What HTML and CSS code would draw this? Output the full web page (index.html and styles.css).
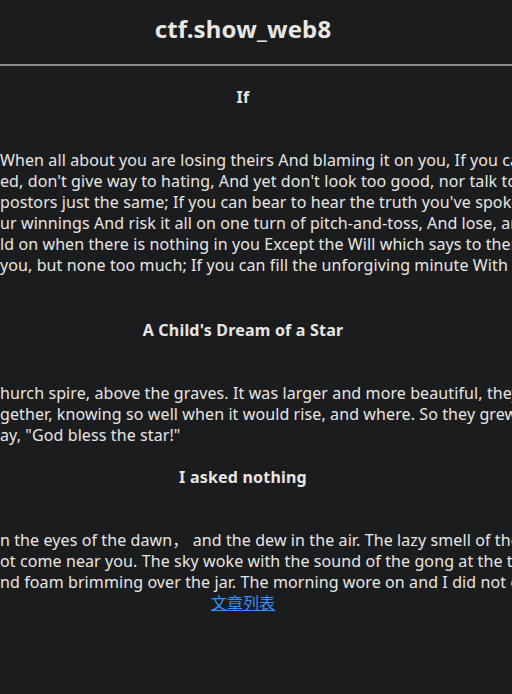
FILE: index.html
```html
<!DOCTYPE html>
<html lang="zh-CN">
<head>
<meta charset="utf-8">
<title>ctf.show_web8</title>
<link rel="stylesheet" href="styles.css">
</head>
<body>
<div class="page">
  <header class="top">
    <h1 class="site-title">ctf.show_web8</h1>
  </header>
  <hr class="rule">
  <main class="articles">
    <article class="post post--first">
      <h2 class="post-title">If</h2>
      <p class="post-body post-body--spaced">When all about you are losing theirs And blaming it on you, If you can trust yourself when all men doubt you,<br>ed, don't give way to hating, And yet don't look too good, nor talk too wise: If you can dream<br>postors just the same; If you can bear to hear the truth you've spoken Twisted by knaves<br>ur winnings And risk it all on one turn of pitch-and-toss, And lose, and start again<br>ld on when there is nothing in you Except the Will which says to them: 'Hold on!'<br>you, but none too much; If you can fill the unforgiving minute With sixty seconds' worth</p>
    </article>
    <article class="post">
      <h2 class="post-title">A Child's Dream of a Star</h2>
      <p class="post-body">hurch spire, above the graves. It was larger and more beautiful, they thought, than all the others,<br>gether, knowing so well when it would rise, and where. So they grew to be such friends<br>ay, "God bless the star!"</p>
    </article>
    <article class="post">
      <h2 class="post-title">I asked nothing</h2>
      <p class="post-body">n the eyes of the dawn， and the dew in the air. The lazy smell of the damp grass<br>ot come near you. The sky woke with the sound of the gong at the temple.<br>nd foam brimming over the jar. The morning wore on and I did not come near you.</p>
    </article>
    <nav class="list-nav"><a class="list-link" href="#">文章列表</a></nav>
  </main>
</div>
</body>
</html>
```
FILE: styles.css
```css
html, body {
  margin: 0;
  padding: 0;
  background: #1b1c1e;
  overflow: hidden;
}

body {
  color: #e8e6e3;
  font-family: "Noto Sans", "Noto Sans CJK SC", sans-serif;
  font-size: 16px;
  line-height: 21px;
}

.page {
  width: 512px;
  height: 694px;
  overflow: hidden;
}

.top {
  width: 486px;
  padding-top: 13px;
  text-align: center;
}

.site-title {
  margin: 0;
  font-size: 24px;
  line-height: 32px;
  font-weight: 700;
  letter-spacing: 0.15px;
}

.rule {
  margin: 19px 0 0;
  border: none;
  height: 2px;
  background: #8b8b8b;
}

.articles {
  width: 486px;
  padding-top: 21px;
  display: flex;
  flex-direction: column;
  gap: 21px;
}

.post-title {
  margin: 0;
  font-size: 16px;
  line-height: 21px;
  font-weight: 700;
  letter-spacing: 0.2px;
  text-align: center;
}

.post-body {
  margin: 42px 0 0;
  white-space: nowrap;
  text-align: left;
  letter-spacing: 0.1px;
}

.post-body--spaced {
  margin-bottom: 23px;
}

.list-nav {
  margin-top: -21px;
  text-align: center;
}

.list-link {
  color: #3391ff;
  text-decoration: underline;
}
```
